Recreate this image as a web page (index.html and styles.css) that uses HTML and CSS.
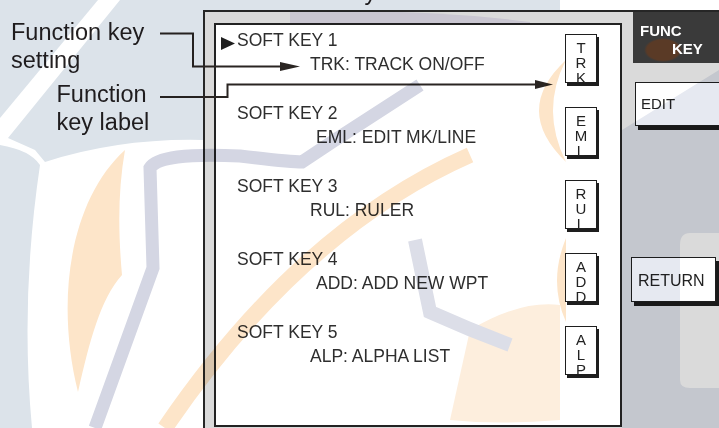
FILE: index.html
```html
<!DOCTYPE html>
<html lang="en">
<head>
    <meta charset="UTF-8">
    <meta name="viewport" content="width=device-width, initial-scale=1.0">
    <title>Function key setting</title>
    <link rel="stylesheet" href="styles.css">
</head>
<body>
    <div class="page">
        <aside class="callouts">
            <p class="callout callout-setting">Function key<br>setting</p>
            <p class="callout callout-label">Function<br>key label</p>
        </aside>

        <section class="device">
            <div class="screen">
                <div class="soft-key">
                    <div class="soft-key-text">
                        <p class="soft-key-name">
                            <span class="cursor"><svg width="14" height="13" viewBox="0 0 14 13"><polygon points="0,0 14,6.5 0,13" fill="#1e1e1e"/></svg></span>SOFT KEY 1
                        </p>
                        <p class="soft-key-func">TRK: TRACK ON/OFF</p>
                    </div>
                    <div class="key-cap"><span>TRK</span></div>
                </div>
                <div class="soft-key">
                    <div class="soft-key-text">
                        <p class="soft-key-name"><span class="cursor"></span>SOFT KEY 2</p>
                        <p class="soft-key-func shifted">EML: EDIT MK/LINE</p>
                    </div>
                    <div class="key-cap"><span>EML</span></div>
                </div>
                <div class="soft-key">
                    <div class="soft-key-text">
                        <p class="soft-key-name"><span class="cursor"></span>SOFT KEY 3</p>
                        <p class="soft-key-func">RUL: RULER</p>
                    </div>
                    <div class="key-cap"><span>RUL</span></div>
                </div>
                <div class="soft-key">
                    <div class="soft-key-text">
                        <p class="soft-key-name"><span class="cursor"></span>SOFT KEY 4</p>
                        <p class="soft-key-func shifted">ADD: ADD NEW WPT</p>
                    </div>
                    <div class="key-cap"><span>ADD</span></div>
                </div>
                <div class="soft-key">
                    <div class="soft-key-text">
                        <p class="soft-key-name"><span class="cursor"></span>SOFT KEY 5</p>
                        <p class="soft-key-func">ALP: ALPHA LIST</p>
                    </div>
                    <div class="key-cap"><span>ALP</span></div>
                </div>
            </div>

            <div class="side">
                <div class="func-key">
                    <span>FUNC</span>
                    <span class="func-key-second">KEY</span>
                </div>
                <div class="side-btn side-btn-edit">EDIT</div>
                <div class="side-btn side-btn-return">RETURN</div>
            </div>
        </section>
    </div>

    <div class="title">Function key</div>

    <!-- leader lines from the callouts into the screen -->
    <svg class="leaders" width="719" height="428" viewBox="0 0 719 428">
        <path d="M160 33.5 H193 V66.5 H284" fill="none" stroke="#2a2522" stroke-width="2"/>
        <polygon points="280,62 300,66.5 280,71" fill="#2a2522"/>
        <path d="M160 97 H227.5 V84.5 H538" fill="none" stroke="#2a2522" stroke-width="2"/>
        <polygon points="535,80 553,84.5 535,89" fill="#2a2522"/>
    </svg>

    <!-- faint logo watermark laid over the whole picture -->
    <svg class="watermark" width="719" height="428" viewBox="0 0 719 428">
        <path d="M0 0 H98 L0 118 Z" fill="#dce3ea"/>
        <path d="M120 0 H560 V10 H203 V140 Q120 138 45 162 L35 150 L8 138 Z" fill="#dce3ea"/>
        <path d="M0 145 Q30 150 40 165 Q20 300 32 428 H0 Z" fill="#dce3ea"/>

        <path d="M125 150 C70 200 55 300 78 392 C90 340 100 300 122 275 C118 230 118 190 125 150 Z" fill="#fde5c9"/>
        <path d="M470 155 Q300 230 165 428" fill="none" stroke="#fde5c9" stroke-width="16"/>
        <path d="M566 60 Q512 110 566 162 Q540 110 566 60 Z" fill="#fde5c9"/>
        <path d="M566 238 Q548 282 566 322 Z" fill="#fde5c9"/>
        <path d="M470 330 Q520 300 560 305 V420 Q500 425 450 420 Z" fill="#fdeedd"/>

        <path d="M95 428 L153 268 L150 168 Q160 152 240 156 Q290 162 302 162 L335 140 L420 85" fill="none" stroke="#d4d6e3" stroke-width="13"/>
        <path d="M415 240 L430 312 Q470 330 510 345" fill="none" stroke="#dcdee8" stroke-width="14"/>
        <path d="M290 12 Q420 8 530 22 V24 H290 Z" fill="#ebe8f5"/>
        <path d="M622 130 L719 70 V233 H690 Q680 233 680 245 V380 Q680 388 690 388 H719 V428 H622 Z" fill="#e6e9f1"/>
    </svg>
</body>
</html>
```

FILE: styles.css
```css
body {
    margin: 0;
    width: 719px;
    height: 428px;
    position: relative;
    overflow: hidden;
    background-color: #fff;
    color: #231f20;
    font-family: "Liberation Sans", Arial, sans-serif;
}

p {
    margin: 0;
}

.page {
    display: flex;
    height: 428px;
}

/* left hand captions */
.callouts {
    width: 203px;
    flex-shrink: 0;
    padding-top: 18px;
}

.callout {
    font-size: 23.5px;
    line-height: 28px;
}

.callout-setting {
    padding-left: 11px;
}

.callout-label {
    margin-top: 6px;
    padding-left: 56.5px;
}

.title {
    position: absolute;
    top: -22px;
    left: 243px;
    font-size: 23.5px;
    line-height: 28px;
}

/* the display */
.device {
    flex: 1;
    display: flex;
    margin-top: 10px;
    border-top: 2px solid #262626;
    border-left: 2px solid #262626;
    background-color: #dadada;
}

.screen {
    box-sizing: border-box;
    width: 408px;
    height: 404px;
    margin: 11px 0 0 9px;
    padding: 2.5px 23px 0 5px;
    border: 2px solid #222;
    background-color: #fff;
    color: #2e2e2e;
}

.soft-key {
    height: 73px;
    display: flex;
    justify-content: space-between;
    align-items: flex-start;
}

.soft-key-name,
.soft-key-func {
    font-size: 17.5px;
    line-height: 24px;
    white-space: nowrap;
}

.soft-key-name {
    display: flex;
    align-items: flex-start;
}

.cursor {
    width: 16px;
    flex-shrink: 0;
}

.cursor svg {
    display: block;
    margin-top: 9.5px;
}

.soft-key-func {
    padding-left: 89px;
}

.soft-key-func.shifted {
    padding-left: 95px;
}

/* vertical key legends */
.key-cap {
    box-sizing: border-box;
    width: 32px;
    height: 49px;
    margin-top: 6.5px;
    padding-top: 3.5px;
    display: flex;
    justify-content: center;
    align-items: flex-start;
    border: 1px solid #1e1e1e;
    box-shadow: 2px 3px 0 #1e1e1e;
    background-color: #fff;
    color: #222;
}

.key-cap span {
    writing-mode: vertical-lr;
    text-orientation: upright;
    font-size: 15px;
    line-height: 1;
    letter-spacing: -2.2px;
}

/* right hand keys */
.side {
    flex: 1;
    margin-left: 11px;
}

.func-key {
    height: 51px;
    box-sizing: border-box;
    padding: 9.5px 0 0 7px;
    background: radial-gradient(ellipse 19px 12px at 30px 38px, #5a3a26 0, #5a3a26 85%, rgba(90, 58, 38, 0) 100%) #3a3a3a;
    color: #fff;
    font-size: 15px;
    font-weight: bold;
    line-height: 18px;
}

.func-key span {
    display: block;
}

.func-key-second {
    padding-left: 32px;
}

.side-btn {
    box-sizing: border-box;
    display: flex;
    align-items: center;
    border: 1px solid #1e1e1e;
    box-shadow: 3px 4px 0 #1a1a1a;
    background-color: #fff;
    color: #222;
    line-height: 18px;
}

.side-btn-edit {
    width: 100px;
    height: 44px;
    margin: 19px 0 0 2px;
    padding-left: 5px;
    font-size: 15px;
}

.side-btn-return {
    width: 85px;
    height: 45px;
    margin: 131px 0 0 -2px;
    padding: 3px 0 0 6px;
    font-size: 16px;
}

/* overlays */
.leaders,
.watermark {
    position: absolute;
    top: 0;
    left: 0;
    pointer-events: none;
}

.watermark {
    mix-blend-mode: multiply;
}
```
